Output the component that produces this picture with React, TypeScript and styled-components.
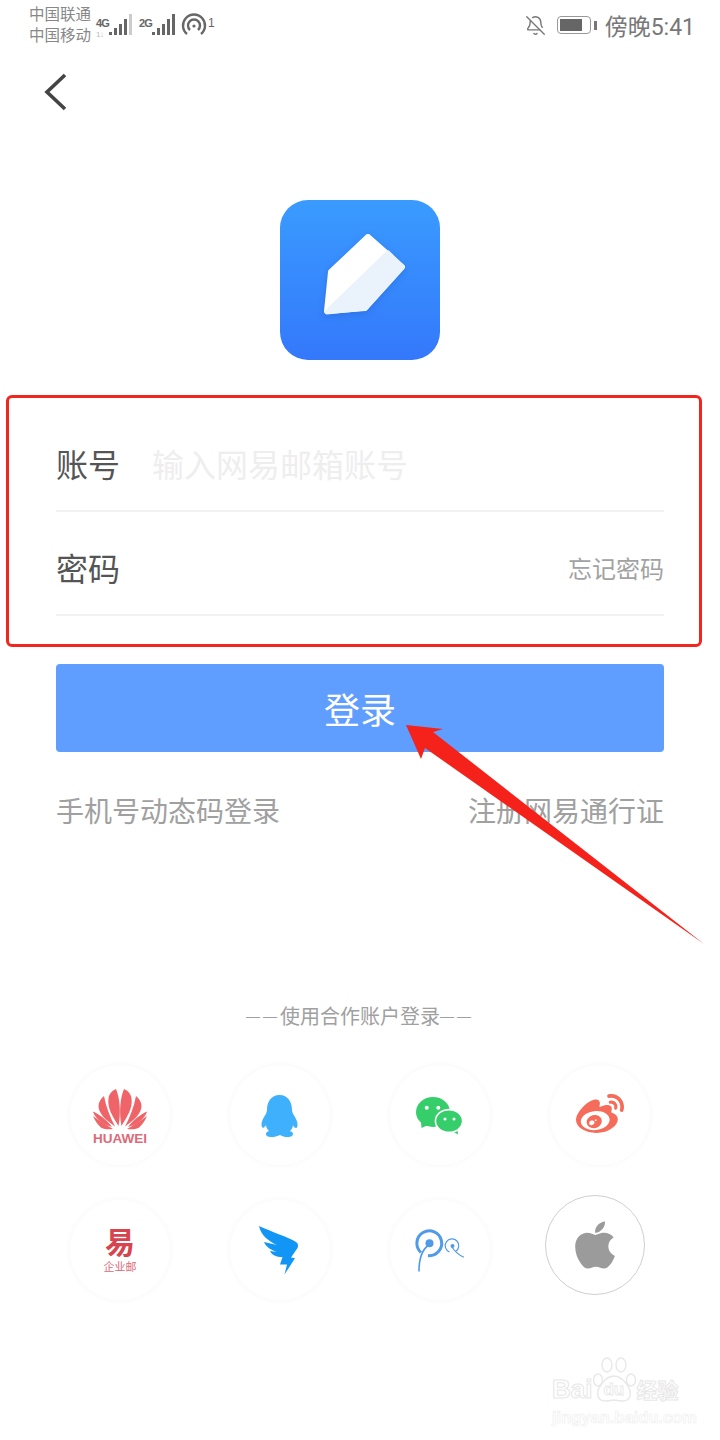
import React from 'react';
import styled, { createGlobalStyle } from 'styled-components';
import { BellOff } from 'lucide-react';
import { FaApple, FaWeibo } from 'react-icons/fa';

const GlobalStyle = createGlobalStyle`
  html, body {
    margin: 0;
    padding: 0;
    background: #fff;
    font-family: "Noto Sans CJK SC", "Liberation Sans", sans-serif;
  }
`;

function SignalBars({ faded }: { faded?: boolean }) {
  return (
    <svg width="23" height="22" viewBox="0 0 23 22">
      <rect x="0" y="18" width="3" height="3" fill="#666" />
      <rect x="5" y="14" width="3" height="7" fill="#666" />
      <rect x="10" y="10" width="3" height="11" fill="#666" />
      <rect x="15" y="5" width="3" height="16" fill="#666" />
      <rect x="20" y="0" width="3" height="21" fill={faded ? '#ccc' : '#666'} />
    </svg>
  );
}

function HuaweiIcon() {
  const petals = (
    <g fill="#ee6468">
      <path d="M48.5 61C43 52 37 43 38.5 33.5C39 29 42 25.5 46 24C50 33 51 48 48.5 61Z" />
      <path d="M45 61.5C37 56 28.5 49 28.5 41C28.5 37 31 33.5 34 31C36 42 40 52 45 61.5Z" />
      <path d="M42 62C34 60 26 55 22.8 46.5C29 49 37 55 42 62Z" />
      <path d="M43 64C35 59 28 55 23 51C25 56 28 60 31.5 63C35 64.5 39 64.5 43 64Z" />
    </g>
  );
  return (
    <svg width="100" height="100" viewBox="0 0 100 100">
      {petals}
      <g transform="translate(100 0) scale(-1 1)">{petals}</g>
      <HuaweiMark x="50" y="78">HUAWEI</HuaweiMark>
    </svg>
  );
}

function QQIcon() {
  return (
    <svg width="100" height="100" viewBox="0 0 100 100">
      <path
        fill="#3fb0fb"
        d="M49.5 30C58 30 62 37 62 45C62 48 64 50 66 54C68 58 68 63 66 63C65 63 63 61 63 60C63 63 61 65 60 66C63 67 64 69 62 71C59 73 53 72 50 70C46 72 40 73 37 71C35 69 36 67 39 66C37 64 36 62 36 60C35 62 33 63 33 63C31 62 31 58 33 54C35 50 37 48 37 45C37 37 41 30 49.5 30Z"
      />
    </svg>
  );
}

function WechatIcon() {
  return (
    <svg width="100" height="100" viewBox="0 0 100 100">
      <path fill="#36cd6b" d="M31 57L31.5 63L38 60Z" />
      <ellipse cx="43" cy="47" rx="17" ry="15" fill="#36cd6b" />
      <path fill="#36cd6b" d="M62 66L68 69.5L67 62Z" />
      <ellipse cx="59" cy="56" rx="13.6" ry="11.4" fill="#36cd6b" stroke="#fff" strokeWidth="1.6" />
      <circle cx="36.7" cy="42.7" r="2" fill="#fff" />
      <circle cx="48.3" cy="42.7" r="2" fill="#fff" />
      <circle cx="55" cy="54" r="1.5" fill="#fff" />
      <circle cx="64" cy="54" r="1.5" fill="#fff" />
    </svg>
  );
}

function YiIcon() {
  return (
    <svg width="100" height="100" viewBox="0 0 100 100">
      <YiGlyph x="50" y="53">易</YiGlyph>
      <YiCaption x="50" y="71">企业邮</YiCaption>
    </svg>
  );
}

function DingIcon() {
  return (
    <svg width="100" height="100" viewBox="0 0 100 100">
      <path
        fill="#1296f5"
        d="M29 26C42 32 58 37 66 42C68 43 68.5 46 67.5 48L61 57.5L65 58.3L54.5 74.5L57 64.5L50 64.5L52.5 57C46 57 42 55 40 51L47 52C41 50 36 47 34 42L47 45C38 41 31 35 29 26Z"
      />
    </svg>
  );
}

function PopoIcon() {
  return (
    <svg width="100" height="100" viewBox="0 0 100 100" fill="none" stroke="#4f9be8">
      <path d="M31 52.5A12.4 12.4 0 1 1 38 55.6" strokeWidth="3" />
      <circle cx="39.5" cy="43.3" r="4" fill="#4f9be8" stroke="none" />
      <path d="M38.5 45C32 50 29 60 29 71" strokeWidth="1.6" strokeLinecap="round" />
      <path d="M59.5 52A6.8 6.8 0 1 1 65.5 51.5" strokeWidth="1.2" />
      <circle cx="62.5" cy="46" r="2" fill="#4f9be8" stroke="none" />
      <path d="M62 47C65 52 69 55 73.5 57" strokeWidth="1.2" strokeLinecap="round" />
    </svg>
  );
}

export default function App() {
  return (
    <Page>
      <GlobalStyle />
      <StatusBar>
        <StatusLeft>
          <Carriers>
            <span>中国联通</span>
            <span>中国移动</span>
          </Carriers>
          <NetworkTag>
            4G
            <small>1↓</small>
          </NetworkTag>
          <SignalBars faded />
          <NetworkTag $second>2G</NetworkTag>
          <SignalBars />
          <HotspotIcon width="28" height="24" viewBox="0 0 28 24" fill="none" stroke="#666" strokeWidth="2.4">
            <path d="M7 21A11 11 0 1 1 21 21" />
            <path d="M10 17A6 6 0 1 1 18 17" />
            <circle cx="14" cy="13" r="1.6" fill="#666" stroke="none" />
          </HotspotIcon>
          <HotspotCount>1</HotspotCount>
        </StatusLeft>
        <StatusRight>
          <BellOff size={21} color="#777" strokeWidth={1.6} />
          <Battery>
            <BatteryLevel />
          </Battery>
          <BatteryNub />
          <Clock>傍晚5:41</Clock>
        </StatusRight>
      </StatusBar>

      <BackRow>
        <svg width="24" height="38" viewBox="0 0 24 38" fill="none" stroke="#444" strokeWidth="3.6">
          <path d="M22 2L4 19L22 36" />
        </svg>
      </BackRow>

      <LogoWrap>
        <AppLogo>
          <svg width="160" height="160" viewBox="0 0 160 160">
            <path
              d="M47 111L51 72L88 37L122 67L85 108Z"
              fill="#fff"
              stroke="#fff"
              strokeWidth="6"
              strokeLinejoin="round"
            />
            <path
              d="M47 112L108 53L122 67L85 108Z"
              fill="#eaf2fc"
              stroke="#eaf2fc"
              strokeWidth="5"
              strokeLinejoin="round"
            />
          </svg>
        </AppLogo>
      </LogoWrap>

      <Form>
        <Row>
          <RowLabel>账号</RowLabel>
          <Placeholder>输入网易邮箱账号</Placeholder>
        </Row>
        <Row>
          <RowLabel>密码</RowLabel>
          <Forgot>忘记密码</Forgot>
        </Row>
        <LoginButton>登录</LoginButton>
        <Links>
          <span>手机号动态码登录</span>
          <span>注册网易通行证</span>
        </Links>
      </Form>

      <PartnerTitle>
        <Dash>——</Dash>使用合作账户登录<Dash>——</Dash>
      </PartnerTitle>
      <PartnerGrid>
        <Partner><HuaweiIcon /></Partner>
        <Partner><QQIcon /></Partner>
        <Partner><WechatIcon /></Partner>
        <Partner><FaWeibo size={48} color="#f56c5a" /></Partner>
        <Partner><YiIcon /></Partner>
        <Partner><DingIcon /></Partner>
        <Partner><PopoIcon /></Partner>
        <Partner $outlined><FaApple size={54} color="#9b9b9b" /></Partner>
      </PartnerGrid>

      <Highlight />
      <Arrow width="720" height="1440" viewBox="0 0 720 1440">
        <path fill="#f5221b" d="M406 725L443 729L433 732L704 944L425 748L421 759Z" />
      </Arrow>

      <Watermark>
        <WatermarkTop>
          <BaiText>Bai</BaiText>
          <Paw>
            <svg width="46" height="52" viewBox="0 0 46 52" fill="none" stroke="#e8e8e8" strokeWidth="1.4">
              <ellipse cx="6" cy="26" rx="4.5" ry="6" />
              <ellipse cx="15" cy="11" rx="5" ry="7" />
              <ellipse cx="29" cy="11" rx="5" ry="7" />
              <ellipse cx="39" cy="26" rx="4.5" ry="6" />
              <path d="M22 22C30 22 40 34 38 42C36 49 28 47 22 46C16 47 8 49 6 42C4 34 14 22 22 22Z" />
            </svg>
            <DuText>du</DuText>
          </Paw>
          <JingyanText>经验</JingyanText>
        </WatermarkTop>
        <WatermarkUrl>jingyan.baidu.com</WatermarkUrl>
      </Watermark>
    </Page>
  );
}

const Page = styled.div`
  position: relative;
  width: 720px;
  height: 1440px;
  overflow: hidden;
  background: #fff;
`;

const StatusBar = styled.div`
  display: flex;
  justify-content: space-between;
  align-items: center;
  height: 50px;
  padding: 0 25px 0 29px;
`;

const StatusLeft = styled.div`
  display: flex;
  align-items: center;
`;

const Carriers = styled.div`
  display: flex;
  flex-direction: column;
  font-size: 15.5px;
  line-height: 21px;
  color: #888;
  margin-top: -3px;
`;

const NetworkTag = styled.div<{ $second?: boolean }>`
  display: flex;
  flex-direction: column;
  align-self: flex-start;
  width: 13px;
  margin: 11px 0 0 ${({ $second }) => ($second ? '7px' : '5px')};
  font-family: "Liberation Sans", sans-serif;
  font-size: 11px;
  font-weight: 700;
  line-height: 13px;
  letter-spacing: -0.8px;
  color: #666;

  small {
    font-size: 8px;
    line-height: 10px;
    font-weight: 400;
    color: #bbb;
  }
`;

const HotspotIcon = styled.svg`
  margin-left: 5px;
`;

const HotspotCount = styled.div`
  align-self: flex-start;
  margin: 10px 0 0 0;
  font-family: "Liberation Sans", sans-serif;
  font-size: 12px;
  color: #666;
`;

const StatusRight = styled.div`
  display: flex;
  align-items: center;
`;

const Battery = styled.div`
  box-sizing: border-box;
  width: 34px;
  height: 18px;
  margin-left: 11px;
  padding: 2px;
  border: 1.5px solid #999;
  border-radius: 4px;
`;

const BatteryLevel = styled.div`
  width: 22px;
  height: 100%;
  background: #666;
`;

const BatteryNub = styled.div`
  width: 3px;
  height: 9px;
  margin-left: 3px;
  background: #777;
`;

const Clock = styled.div`
  margin-left: 8px;
  font-family: Roboto, "Noto Sans CJK SC", sans-serif;
  font-size: 23px;
  color: #777;
`;

const BackRow = styled.div`
  display: flex;
  padding: 23px 0 0 43px;
  height: 38px;
`;

const LogoWrap = styled.div`
  display: flex;
  justify-content: center;
  margin-top: 89px;
`;

const AppLogo = styled.div`
  width: 160px;
  height: 160px;
  border-radius: 28px;
  overflow: hidden;
  background: linear-gradient(180deg, #3a9bff 0%, #3478fb 100%);

  svg {
    display: block;
    filter: drop-shadow(0 2px 3px rgba(20, 70, 160, 0.25));
  }
`;

const Form = styled.div`
  display: flex;
  flex-direction: column;
  margin-top: 48px;
  padding: 0 56px;
`;

const Row = styled.div`
  box-sizing: border-box;
  display: flex;
  align-items: center;
  height: 104px;
  padding-top: 8px;
  border-bottom: 2px solid #f1f1f1;
`;

const RowLabel = styled.div`
  width: 96px;
  font-size: 32px;
  color: #555;
`;

const Placeholder = styled.div`
  font-size: 32px;
  color: #eeeeee;
`;

const Forgot = styled.div`
  margin-left: auto;
  font-size: 24px;
  color: #a2a2a2;
`;

const LoginButton = styled.div`
  display: flex;
  justify-content: center;
  align-items: center;
  height: 88px;
  margin-top: 48px;
  border-radius: 4px;
  background: #5f9dff;
  font-size: 36px;
  color: #fff;
`;

const Links = styled.div`
  display: flex;
  justify-content: space-between;
  margin-top: 38px;
  font-size: 28px;
  line-height: 40px;
  color: #a0a0a0;
`;

const PartnerTitle = styled.div`
  display: flex;
  justify-content: center;
  margin-top: 171px;
  font-size: 20px;
  line-height: 30px;
  color: #a0a0a0;
`;

const Dash = styled.span`
  font-family: "Liberation Sans", sans-serif;
  font-size: 14px;
  letter-spacing: 3px;
`;

const PartnerGrid = styled.div`
  display: grid;
  grid-template-columns: repeat(4, 100px);
  gap: 35px 60px;
  margin-top: 34px;
  padding-left: 70px;
`;

const Partner = styled.div<{ $outlined?: boolean }>`
  box-sizing: border-box;
  display: flex;
  justify-content: center;
  align-items: center;
  width: 100px;
  height: 100px;
  border-radius: 50%;
  background: #fff;
  box-shadow: ${({ $outlined }) => ($outlined ? 'none' : '0 0 6px rgba(0, 0, 0, 0.04)')};
  border: ${({ $outlined }) => ($outlined ? '1px solid #cfcfcf' : 'none')};
  margin: ${({ $outlined }) => ($outlined ? '-5px 0 0 -5px' : '0')};

  svg {
    display: block;
  }
`;

const HuaweiMark = styled.text`
  font-family: "Liberation Sans", sans-serif;
  font-size: 13.5px;
  font-weight: 700;
  text-anchor: middle;
  fill: #dc6a78;
`;

const YiGlyph = styled.text`
  font-size: 30px;
  font-weight: 700;
  text-anchor: middle;
  fill: #d6454f;
`;

const YiCaption = styled.text`
  font-size: 11px;
  text-anchor: middle;
  fill: #dc6a78;
`;

const Highlight = styled.div`
  position: absolute;
  left: 6px;
  top: 395px;
  width: 696px;
  height: 252px;
  box-sizing: border-box;
  border: 3.5px solid #f0261f;
  border-radius: 6px;
`;

const Arrow = styled.svg`
  position: absolute;
  left: 0;
  top: 0;
  pointer-events: none;
`;

const Watermark = styled.div`
  position: absolute;
  left: 552px;
  top: 1362px;
  width: 130px;
  color: transparent;
`;

const WatermarkTop = styled.div`
  display: flex;
  align-items: flex-end;
  height: 40px;
`;

const BaiText = styled.span`
  font-family: "Liberation Sans", sans-serif;
  font-size: 26px;
  line-height: 26px;
  font-weight: 700;
  -webkit-text-stroke: 1px #e8e8e8;
  white-space: nowrap;
`;

const JingyanText = styled.span`
  font-size: 21px;
  line-height: 26px;
  font-weight: 700;
  -webkit-text-stroke: 1px #e8e8e8;
  white-space: nowrap;
`;

const Paw = styled.div`
  position: relative;
  width: 44px;
  height: 40px;
  flex: none;

  svg {
    position: absolute;
    left: 0;
    top: -8px;
  }
`;

const DuText = styled.span`
  position: absolute;
  left: 11px;
  top: 18px;
  font-family: "Liberation Sans", sans-serif;
  font-size: 17px;
  line-height: 20px;
  font-weight: 700;
  -webkit-text-stroke: 0.8px #e8e8e8;
`;

const WatermarkUrl = styled.div`
  margin-top: 6px;
  font-family: "Liberation Sans", sans-serif;
  font-size: 16.5px;
  line-height: 18px;
  font-weight: 700;
  white-space: nowrap;
  -webkit-text-stroke: 0.7px #efefef;
`;
